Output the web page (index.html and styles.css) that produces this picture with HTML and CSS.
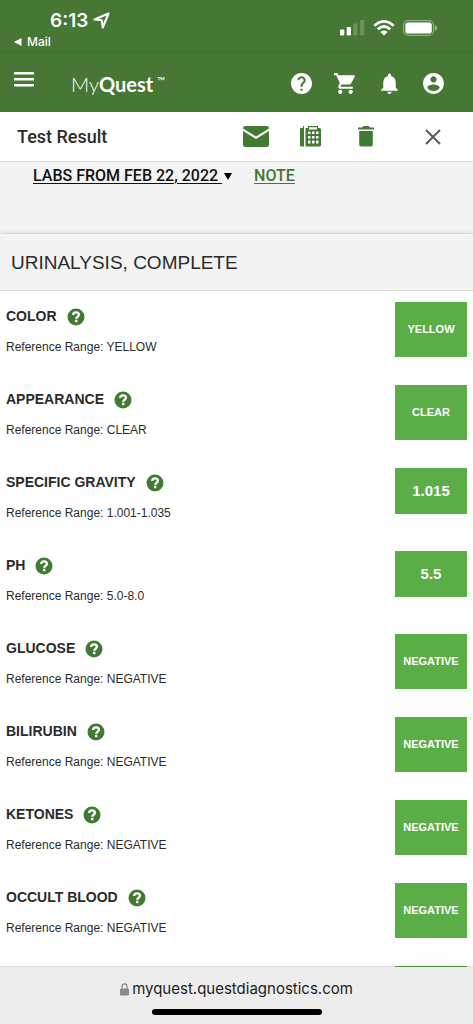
FILE: index.html
```html
<!DOCTYPE html>
<html lang="en">
<head>
<meta charset="utf-8">
<meta name="viewport" content="width=device-width, initial-scale=1">
<title>MyQuest - Test Result</title>
<link rel="stylesheet" href="styles.css">
</head>
<body>
<svg width="0" height="0" class="sprite" aria-hidden="true">
  <symbol id="help" viewBox="2 2 20 20"><path d="M12 2C6.480 2 2 6.480 2 12s4.480 10 10 10 10-4.480 10-10S17.520 2 12 2zm1 17h-2v-2h2v2zm2.070-7.750l-.9.920C13.450 12.900 13 13.500 13 15h-2v-.5c0-1.100.45-2.100 1.170-2.830l1.240-1.260c.37-.36.59-.86.59-1.410 0-1.100-.9-2-2-2s-2 .9-2 2H8c0-2.210 1.790-4 4-4s4 1.790 4 4c0 .88-.36 1.680-.93 2.250z"/></symbol>
  <symbol id="hint" viewBox="0 0 18 18"><circle cx="9" cy="9" r="8.500" fill="#417a33"/><path d="M6.200 7C6.200 5.200 7.500 4.400 9.100 4.400S11.900 5.300 11.900 6.800C11.900 8.700 9.200 8.800 9.200 10.800" fill="none" stroke="#fff" stroke-width="2.300"/><rect x="8" y="11.800" width="2.400" height="2.400" fill="#fff"/></symbol>
</svg>
<div class="shell">
  <header class="top">
    <div class="status">
      <div class="clock">
        <div class="time">6:13
          <svg width="17" height="17" viewBox="0 0 17 17"><path d="M1.500 7.500L15.500 1.500L9.800 15.500L8.800 8.300Z" fill="none" stroke="#fff" stroke-width="2.100" stroke-linejoin="round"/></svg>
        </div>
        <a class="back" href="#">
          <svg width="8" height="8" viewBox="0 0 8 8"><path d="M0 4L7.500 0V8Z" fill="#fff"/></svg>Mail</a>
      </div>
      <div class="signals">
        <svg width="25" height="16" viewBox="0 0 25 16" fill="#fff"><rect y="9.500" width="4.300" height="6" rx="1"/><rect x="6.700" y="7" width="4.300" height="8.500" rx="1"/><rect x="13.300" y="3.500" width="4.300" height="12" rx="1" opacity=".2"/><rect x="20" y="0" width="4.300" height="15.500" rx="1" opacity=".2"/></svg>
        <svg width="22" height="16" viewBox="0 0 22 16"><path d="M1.300 5.700Q11-3 20.700 5.700M4.800 9.200Q11 3.700 17.200 9.200" fill="none" stroke="#fff" stroke-width="2.800"/><path d="M11 15.500L7.300 11.900Q11 9 14.700 11.900Z" fill="#fff"/></svg>
        <svg width="34" height="16" viewBox="0 0 34 16"><rect x=".6" y=".6" width="30" height="14.800" rx="4.500" fill="none" stroke="#fff" stroke-opacity=".4" stroke-width="1.200"/><rect x="2.400" y="2.400" width="26.400" height="11.200" rx="2.600" fill="#fff"/><path d="M32 5.500q2 .5 2 2.500t-2 2.500z" fill="#fff" opacity=".5"/></svg>
      </div>
    </div>
    <nav class="nav">
      <button class="menu" aria-label="Menu"><svg width="20" height="15" viewBox="0 0 20 15" fill="#fff"><path d="M0 0h20v2.500H0zM0 6h20v2.500H0zM0 12h20v2.500H0z"/></svg></button>
      <a class="brand" href="#"><span>My</span><b>Quest</b><sup>™</sup></a>
      <div class="nav-actions">
        <button aria-label="Help"><svg width="21" height="21"><use href="#help"/></svg></button>
        <button aria-label="Cart"><svg width="25" height="25" viewBox="0 0 24 24"><path d="M7 18c-1.100 0-1.990.9-1.990 2S5.900 22 7 22s2-.9 2-2-.9-2-2-2zM1 2v2h2l3.600 7.590-1.350 2.450c-.16.28-.25.61-.25.960 0 1.100.9 2 2 2h12v-2H7.420c-.14 0-.25-.11-.25-.25l.03-.12.9-1.630h7.450c.75 0 1.410-.41 1.750-1.030l3.580-6.490c.08-.14.12-.31.12-.48 0-.55-.45-1-1-1H5.210l-.94-2H1zm16 16c-1.100 0-1.990.9-1.990 2s.89 2 1.990 2 2-.9 2-2-.9-2-2-2z"/></svg></button>
        <button aria-label="Notifications"><svg width="25" height="25" viewBox="0 0 24 24"><path d="M12 22c1.100 0 2-.9 2-2h-4c0 1.100.89 2 2 2zm6-6v-5c0-3.070-1.640-5.640-4.500-6.320V4c0-.83-.67-1.500-1.500-1.500s-1.500.67-1.500 1.500v.68C7.630 5.360 6 7.920 6 11v5l-2 2v1h16v-1l-2-2z"/></svg></button>
        <button aria-label="Account"><svg width="25" height="25" viewBox="0 0 24 24"><path d="M12 2C6.480 2 2 6.480 2 12s4.480 10 10 10 10-4.480 10-10S17.520 2 12 2zm0 3c1.660 0 3 1.340 3 3s-1.340 3-3 3-3-1.340-3-3 1.340-3 3-3zm0 14.200c-2.500 0-4.710-1.280-6-3.220.03-1.990 4-3.080 6-3.080 1.990 0 5.970 1.090 6 3.080-1.290 1.940-3.500 3.220-6 3.220z"/></svg></button>
      </div>
    </nav>
  </header>

  <div class="toolbar">
    <h1>Test Result</h1>
    <div class="tools">
      <button aria-label="Email"><svg width="26" height="21" viewBox="0 0 26 21"><path d="M2 0H24Q26 0 26 2.500L13 10.500L0 2.500Q0 0 2 0ZM0 5L13 13L26 5V18.500Q26 21 23.500 21H2.500Q0 21 0 18.500Z"/></svg></button>
      <button aria-label="Fax"><svg width="21" height="21" viewBox="0 0 21 21"><path d="M1 2H3V0H4V20.500H1.500Q0 20.500 0 19V3Q0 2 1 2Z"/><path fill-rule="evenodd" d="M5.500 2H8V0H18V2H19.500Q21 2 21 3.500V19Q21 20.500 19.500 20.500H5.500ZM9 1.200V3.500H17V1.200ZM8 5.500V8H10.500V5.500ZM12 5.500V8H14.500V5.500ZM16 5.500V8H18.500V5.500ZM8 10V12.500H10.500V10ZM12 10V12.500H14.500V10ZM16 10V12.500H18.500V10ZM8 14.500V17.500H10.500V14.500ZM12 14.500V17.500H14.500V14.500ZM16 14.500V17.500H18.500V14.500Z"/></svg></button>
      <button aria-label="Delete"><svg width="16" height="21" viewBox="0 0 16 21"><path d="M0 1.500H4Q4.500 0 6 0H10Q11.500 0 12 1.500H16V3.500H0ZM1.200 5H14.800V18.500Q14.800 20.500 12.800 20.500H3.200Q1.200 20.500 1.200 18.500Z"/></svg></button>
    </div>
    <button class="close" aria-label="Close"><svg width="16" height="16" viewBox="0 0 16 16"><path d="M1 1L15 15M15 1L1 15" stroke="#5b5b5b" stroke-width="2"/></svg></button>
  </div>

  <main class="content">
    <div class="filters">
      <button class="labs"><span>LABS FROM FEB 22, 2022&nbsp;</span><svg width="8" height="7" viewBox="0 0 8 7"><path d="M0 0H8L4 7Z"/></svg></button>
      <a class="note" href="#">NOTE</a>
    </div>
    <section class="panel">
      <h2>URINALYSIS, COMPLETE</h2>
      <ul class="results">
        <li><div><h3>COLOR <button aria-label="About color"><svg width="18" height="18"><use href="#hint"/></svg></button></h3><p>Reference Range: YELLOW</p></div><strong class="badge">YELLOW</strong></li>
        <li><div><h3>APPEARANCE <button aria-label="About appearance"><svg width="18" height="18"><use href="#hint"/></svg></button></h3><p>Reference Range: CLEAR</p></div><strong class="badge">CLEAR</strong></li>
        <li><div><h3>SPECIFIC GRAVITY <button aria-label="About specific gravity"><svg width="18" height="18"><use href="#hint"/></svg></button></h3><p>Reference Range: 1.001-1.035</p></div><strong class="badge number">1.015</strong></li>
        <li><div><h3>PH <button aria-label="About pH"><svg width="18" height="18"><use href="#hint"/></svg></button></h3><p>Reference Range: 5.0-8.0</p></div><strong class="badge number">5.5</strong></li>
        <li><div><h3>GLUCOSE <button aria-label="About glucose"><svg width="18" height="18"><use href="#hint"/></svg></button></h3><p>Reference Range: NEGATIVE</p></div><strong class="badge">NEGATIVE</strong></li>
        <li><div><h3>BILIRUBIN <button aria-label="About bilirubin"><svg width="18" height="18"><use href="#hint"/></svg></button></h3><p>Reference Range: NEGATIVE</p></div><strong class="badge">NEGATIVE</strong></li>
        <li><div><h3>KETONES <button aria-label="About ketones"><svg width="18" height="18"><use href="#hint"/></svg></button></h3><p>Reference Range: NEGATIVE</p></div><strong class="badge">NEGATIVE</strong></li>
        <li><div><h3>OCCULT BLOOD <button aria-label="About occult blood"><svg width="18" height="18"><use href="#hint"/></svg></button></h3><p>Reference Range: NEGATIVE</p></div><strong class="badge">NEGATIVE</strong></li>
        <li><div></div><strong class="badge"></strong></li>
      </ul>
    </section>
  </main>

  <footer class="browser">
    <div class="address"><svg width="9" height="13" viewBox="0 0 9 13"><path d="M2 6V3.500Q2 .8 4.500 .8T7 3.500V6" fill="none" stroke="#8a8a8d" stroke-width="1.200"/><rect y="5.500" width="9" height="7" rx="1.200" fill="#8a8a8d"/></svg>myquest.questdiagnostics.com</div>
    <div class="home"></div>
  </footer>
</div>
</body>
</html>
```
FILE: styles.css
```css
* { box-sizing: border-box; }
body, h1, h2, h3, p, ul { margin: 0; padding: 0; }
body { font-family: "Liberation Sans", Arial, sans-serif; color: #2b2b2b; background: #fff; }
button { border: 0; padding: 0; background: none; font: inherit; color: inherit; cursor: pointer; }
svg { display: block; flex: none; }
.sprite { position: absolute; }
.shell { height: 100vh; display: flex; flex-direction: column; }

.top { background: #467735; color: #fff; flex: none; }
.status { display: flex; justify-content: space-between; height: 52px; padding: 9px 36px 0 14px; border-bottom: 1px solid #42703a; font-family: Inter, sans-serif; }
.time { display: flex; align-items: center; gap: 5px; padding-left: 36px; font-size: 19px; line-height: 23px; font-weight: 600; }
.back { display: flex; align-items: center; gap: 5px; color: #fff; text-decoration: none; font-size: 12px; line-height: 20px; font-weight: 500; }
.signals { display: flex; gap: 8px; padding-top: 11px; }
.nav { display: flex; align-items: center; height: 60px; padding: 3px 18px 0 14px; }
.menu { margin-bottom: 8px; }
.brand { display: flex; margin-left: 37px; color: #fff; text-decoration: none; font-family: Lato, sans-serif; font-size: 20px; line-height: 26px; }
.brand span { font-weight: 300; }
.brand sup { margin-left: 4px; padding-top: 3px; font-size: 11px; line-height: 14px; }
.nav-actions { display: flex; margin-left: auto; fill: #fff; }
.nav-actions button { width: 44px; height: 44px; display: grid; place-items: center; }

.toolbar { display: flex; align-items: center; flex: none; height: 50px; padding: 0 18px 0 17px; border-bottom: 1px solid #dedede; background: #fff; }
h1 { font: 500 18px/24px Roboto, sans-serif; }
.tools { display: flex; margin-left: auto; fill: #417a33; }
.tools button { width: 55px; height: 44px; display: grid; place-items: center; }
.close { width: 44px; height: 44px; margin-left: 18px; display: grid; place-items: center; }

.content { flex: 1; min-height: 0; overflow: hidden; background: #f3f3f3; }
.filters { display: flex; gap: 22px; height: 72px; padding: 3px 33px; font: 500 16px/22px Roboto, sans-serif; }
.filters > * { height: 22px; }
.labs { display: flex; align-items: center; gap: 2px; color: #111; }
.labs span, .note { text-decoration: underline; text-underline-offset: 2px; }
.note { color: #417a33; }
.panel { box-shadow: 0 0 4px rgba(0, 0, 0, .25); background: #fff; }
h2 { padding: 16px 11px 15px; border-bottom: 1px solid #dcdcdc; background: #f3f3f3; font-size: 19px; line-height: 25px; font-weight: 400; }
.results { list-style: none; }
.results li { display: flex; justify-content: space-between; align-items: flex-start; height: 83px; padding: 11px 6px 0; }
h3 { display: flex; align-items: center; gap: 10px; height: 24px; padding-top: 4px; font-size: 14px; line-height: 20px; }
h3 button { padding-top: 2px; }
.results p { padding-top: 11px; font-size: 12px; line-height: 20px; }
.badge { width: 72px; min-height: 55px; padding: 20px 0; background: #5bad48; color: #fff; font-size: 11px; line-height: 15px; text-align: center; }
.number { min-height: 46px; padding: 13px 0; font-size: 15px; line-height: 20px; }

.browser { position: relative; flex: none; height: 58px; margin-top: -1px; padding-top: 11px; border-top: 1px solid rgba(0, 0, 0, .15); background: #ededed padding-box; }
.address { display: flex; justify-content: center; align-items: center; gap: 3px; color: #1c1c1c; font: 400 15px/22px Inter, sans-serif; }
.home { width: 170px; height: 6px; margin: 9px auto 0; border-radius: 3px; background: #000; }
```
